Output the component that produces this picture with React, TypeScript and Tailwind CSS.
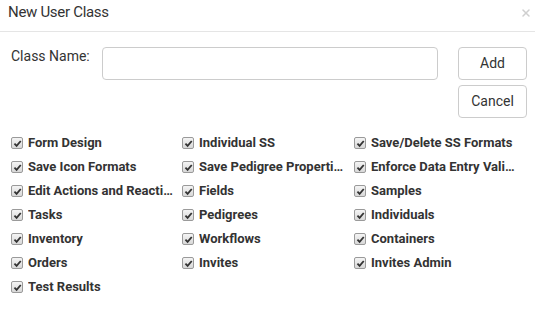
import { X } from 'lucide-react';

const permissions = [
  'Form Design',
  'Individual SS',
  'Save/Delete SS Formats',
  'Save Icon Formats',
  'Save Pedigree Properties',
  'Enforce Data Entry Validation',
  'Edit Actions and Reactions',
  'Fields',
  'Samples',
  'Tasks',
  'Pedigrees',
  'Individuals',
  'Inventory',
  'Workflows',
  'Containers',
  'Orders',
  'Invites',
  'Invites Admin',
  'Test Results',
];

function CheckMark() {
  return (
    <span className="flex h-[12px] w-[12px] shrink-0 items-center justify-center rounded-[2px] border border-[#9a9a9a] bg-gradient-to-b from-[#f4f4f4] to-[#d8d8d8]">
      <svg width="9" height="9" viewBox="0 0 10 10">
        <path d="M1.6 5.2 L4 7.6 L8.6 2.2" fill="none" stroke="#333" strokeWidth="2" />
      </svg>
    </span>
  );
}

export default function App() {
  return (
    <div className="h-[315px] w-[535px] bg-white font-['Roboto',sans-serif] text-[#333]">
      <div className="flex h-[32px] items-start justify-between border-b border-[#e5e5e5] pl-[8px] pr-[3px] pt-[4px]">
        <h4 className="text-[15px] leading-[17px] tracking-[-0.3px]">New User Class</h4>
        <X size={12} strokeWidth={3} className="mt-[3px] text-[#cfcfcf]" />
      </div>

      <div className="flex pl-[11px] pr-[8px] pt-[15px]">
        <label className="w-[91px] pt-[1px] text-[14px] leading-[16px]">Class Name:</label>
        <input className="h-[33px] w-[336px] rounded-[4px] border border-[#ccc] outline-none" />
        <div className="ml-[20px] flex flex-col gap-[5px]">
          <button className="h-[33px] w-[69px] rounded-[4px] border border-[#ccc] bg-white text-[14px]">Add</button>
          <button className="h-[33px] w-[69px] rounded-[4px] border border-[#ccc] bg-white text-[14px]">Cancel</button>
        </div>
      </div>

      <div className="grid grid-cols-[171px_172px_171px] gap-y-[6px] pl-[11px] pt-[16px]">
        {permissions.map((p) => (
          <div key={p} className="flex h-[18px] items-center gap-[5px]">
            <CheckMark />
            <span className="truncate pr-[9px] text-[13px] font-bold leading-[18px]">{p}</span>
          </div>
        ))}
      </div>
    </div>
  );
}
